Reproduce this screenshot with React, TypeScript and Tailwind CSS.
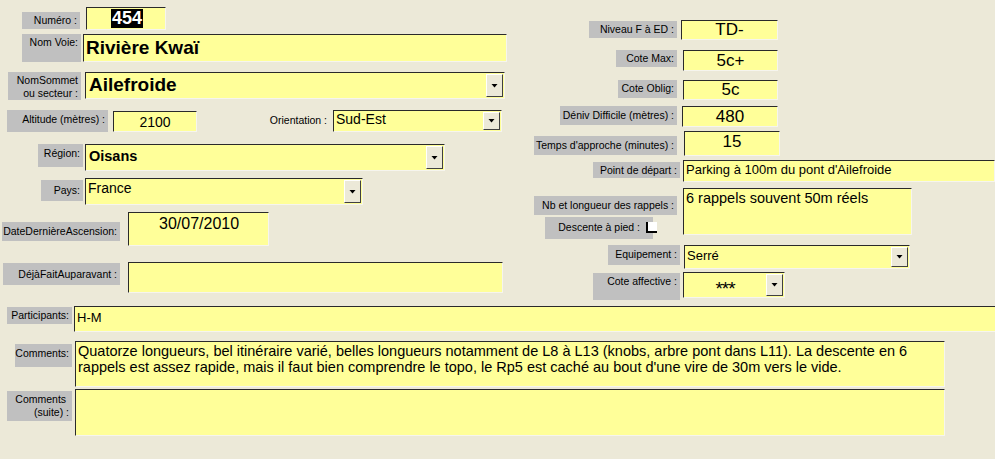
import type { ReactNode } from "react";

const SUNKEN =
  "border-t border-l border-r border-b border-t-[#2a2a2a] border-l-[#2a2a2a] border-r-[#f6f5ee] border-b-[#f6f5ee]";

function Label({ children, className = "" }: { children: ReactNode; className?: string }) {
  return (
    <div
      className={`shrink-0 whitespace-nowrap bg-[#c0c0c0] pr-[3px] pt-[2px] text-right text-[10.5px] leading-[13px] text-black ${className}`}
    >
      {children}
    </div>
  );
}

function DropButton() {
  return (
    <div className="my-[1px] mr-[1px] ml-auto flex w-[17px] shrink-0 self-stretch items-center justify-center border border-t-white border-l-white border-r-[#404040] border-b-[#404040] bg-[#ece9d8]">
      <svg width="7" height="4" viewBox="0 0 7 4">
        <path d="M0.5 0h6L3.5 3.5z" fill="#000" />
      </svg>
    </div>
  );
}

function Field({
  children,
  className = "",
  combo = false,
  center = false,
}: {
  children?: ReactNode;
  className?: string;
  combo?: boolean;
  center?: boolean;
}) {
  return (
    <div className={`flex shrink-0 overflow-hidden bg-[#ffff99] ${SUNKEN} ${className}`}>
      <div
        className={`flex min-w-0 flex-1 whitespace-nowrap text-black ${
          center ? "items-center justify-center" : "items-start pl-[2px]"
        }`}
      >
        {children}
      </div>
      {combo && <DropButton />}
    </div>
  );
}

export default function App() {
  return (
    <div className="h-[459px] w-[995px] overflow-hidden bg-[#ece9d8] font-['Liberation_Sans',Arial,sans-serif]">
      <div className="flex h-[300px]">
        {/* left column */}
        <div className="w-[520px] shrink-0">
          <div className="mt-[7px] flex items-start">
            <Label className="mt-[5px] ml-[22px] h-[17px] w-[58px]">Numéro :</Label>
            <Field className="ml-[6px] h-[23px] w-[80px]">
              <span className="mt-[1px] ml-[22px] bg-black px-[1px] text-[18px] leading-[19px] font-bold text-white">
                454
              </span>
            </Field>
          </div>
          <div className="mt-[4px] flex items-start">
            <Label className="ml-[22px] h-[28px] w-[59px]">Nom Voie:</Label>
            <Field className="ml-[2px] h-[28px] w-[424px]">
              <span className="mt-[2px] text-[19px] leading-[22px] font-bold">Rivière Kwaï</span>
            </Field>
          </div>
          <div className="mt-[10px] flex items-start">
            <Label className="ml-[8px] h-[28px] w-[73px]">
              NomSommet
              <br />
              ou secteur :
            </Label>
            <Field combo className="ml-[4px] h-[27px] w-[420px]">
              <span className="mt-[1px] ml-[1px] text-[19px] leading-[22px] font-bold">Ailefroide</span>
            </Field>
          </div>
          <div className="mt-[10px] flex items-start">
            <Label className="ml-[7px] h-[22px] w-[101px] pt-[3px]">Altitude (mètres) :</Label>
            <Field center className="mt-[1px] ml-[5px] h-[21px] w-[84px]">
              <span className="text-[14px] leading-[16px]">2100</span>
            </Field>
            <div className="mt-[4px] ml-[68px] w-[65px] shrink-0 pr-[3px] text-right text-[10.5px] leading-[13px] whitespace-nowrap">
              Orientation :
            </div>
            <Field combo className="ml-[3px] h-[22px] w-[169px]">
              <span className="text-[14px] leading-[17px]">Sud-Est</span>
            </Field>
          </div>
          <div className="mt-[12px] flex items-start">
            <Label className="ml-[38px] h-[23px] w-[45px] pt-[3px]">Région:</Label>
            <Field combo className="ml-[2px] h-[27px] w-[360px]">
              <span className="mt-[3px] ml-[1px] text-[14.5px] leading-[17px] font-bold">Oisans</span>
            </Field>
          </div>
          <div className="mt-[7px] flex items-start">
            <Label className="mt-[2px] ml-[41px] h-[21px] w-[42px] pt-[4px]">Pays:</Label>
            <Field combo className="ml-[2px] h-[27px] w-[278px]">
              <span className="mt-[1px] text-[14px] leading-[17px]">France</span>
            </Field>
          </div>
          <div className="mt-[7px] flex items-start">
            <Label className="mt-[10px] ml-[2px] h-[19px] w-[118px] pt-[3px]">DateDernièreAscension:</Label>
            <Field className="ml-[8px] h-[34px] w-[141px]">
              <span className="mt-[2px] ml-[28px] text-[16px] leading-[18px]">30/07/2010</span>
            </Field>
          </div>
          <div className="mt-[16px] flex items-start">
            <Label className="mt-[1px] ml-[3px] h-[22px] w-[117px] pt-[5px]">DéjàFaitAuparavant :</Label>
            <Field className="ml-[8px] h-[31px] w-[375px]" />
          </div>
        </div>

        {/* right column */}
        <div className="flex-1">
          <div className="mt-[20px] flex items-start">
            <Label className="mt-[1px] ml-[69px] h-[17px] w-[88px]">Niveau F à ED :</Label>
            <Field center className="ml-[4px] h-[20px] w-[97px]">
              <span className="text-[17px] leading-[18px]">TD-</span>
            </Field>
          </div>
          <div className="mt-[10px] flex items-start">
            <Label className="ml-[96px] h-[17px] w-[61px]">Cote Max:</Label>
            <Field center className="ml-[6px] h-[21px] w-[95px]">
              <span className="text-[17px] leading-[18px]">5c+</span>
            </Field>
          </div>
          <div className="mt-[9px] flex items-start">
            <Label className="ml-[98px] h-[18px] w-[59px]">Cote Oblig:</Label>
            <Field center className="ml-[6px] h-[20px] w-[95px]">
              <span className="text-[17px] leading-[18px]">5c</span>
            </Field>
          </div>
          <div className="mt-[6px] flex items-start">
            <Label className="ml-[40px] h-[19px] w-[117px] pt-[3px]">Déniv Difficile (mètres) :</Label>
            <Field center className="ml-[5px] h-[21px] w-[96px]">
              <span className="text-[17px] leading-[18px]">480</span>
            </Field>
          </div>
          <div className="mt-[4px] flex items-start">
            <Label className="mt-[5px] ml-[14px] h-[19px] w-[143px] pt-[3px]">Temps d&apos;approche (minutes) :</Label>
            <Field center className="ml-[7px] h-[25px] w-[96px]">
              <span className="mb-[3px] text-[17px] leading-[18px]">15</span>
            </Field>
          </div>
          <div className="mt-[4px] flex items-start">
            <Label className="mt-[2px] ml-[73px] h-[16px] w-[87px] pt-[1px]">Point de départ :</Label>
            <Field className="ml-[3px] h-[22px] w-[312px]">
              <span className="mt-[1px] text-[13px] leading-[16px]">Parking à 100m du pont d&apos;Ailefroide</span>
            </Field>
          </div>
          <div className="mt-[6px] flex items-start">
            <div className="w-[160px] shrink-0">
              <Label className="mt-[8px] ml-[14px] h-[19px] w-[143px] pt-[3px]">Nb et longueur des rappels :</Label>
              <div className="mt-[2px] flex items-start">
                <Label className="ml-[25px] h-[22px] w-[108px] pt-[4px] pr-[13px]">Descente à pied :</Label>
                <div className="mt-[5px] ml-[-7px] h-[11px] w-[11px] border-b-2 border-l-2 border-black bg-white" />
              </div>
            </div>
            <Field className="ml-[3px] h-[47px] w-[229px]">
              <span className="mt-[1px] text-[14.5px] leading-[17px]">6 rappels souvent 50m réels</span>
            </Field>
          </div>
          <div className="mt-[6px] flex items-start">
            <Label className="ml-[88px] h-[20px] w-[72px] pt-[3px]">Equipement :</Label>
            <Field combo className="ml-[4px] h-[24px] w-[226px]">
              <span className="mt-[2px] text-[13px] leading-[16px]">Serré</span>
            </Field>
          </div>
          <div className="mt-[3px] flex items-start">
            <Label className="mt-[1px] ml-[73px] h-[27px] w-[87px] pt-[1px]">Cote affective :</Label>
            <Field combo center className="ml-[3px] h-[26px] w-[102px]">
              <span className="mt-[7px] text-[19px] leading-[16px] tracking-[-1px]">***</span>
            </Field>
          </div>
        </div>
      </div>

      {/* bottom rows */}
      <div className="mt-[6px] flex items-start">
        <Label className="mt-[1px] ml-[7px] h-[17px] w-[65px]">Participants:</Label>
        <Field className="ml-[2px] h-[26px] w-[925px]">
          <span className="mt-[3px] text-[13px] leading-[16px]">H-M</span>
        </Field>
      </div>
      <div className="mt-[9px] flex items-start">
        <Label className="mt-[3px] ml-[15px] h-[23px] w-[57px] pt-[3px]">Comments:</Label>
        <Field className="ml-[3px] h-[46px] w-[870px]">
          <span className="mt-[1px] text-[14.5px] leading-[16px]">
            Quatorze longueurs, bel itinéraire varié, belles longueurs notamment de L8 à L13 (knobs, arbre pont dans L11). La descente en 6
            <br />
            rappels est assez rapide, mais il faut bien comprendre le topo, le Rp5 est caché au bout d&apos;une vire de 30m vers le vide.
          </span>
        </Field>
      </div>
      <div className="mt-[2px] flex items-start">
        <Label className="mt-[2px] ml-[7px] h-[30px] w-[65px]">
          Comments&nbsp;
          <br />
          (suite) :
        </Label>
        <Field className="ml-[3px] h-[47px] w-[870px]" />
      </div>
    </div>
  );
}
